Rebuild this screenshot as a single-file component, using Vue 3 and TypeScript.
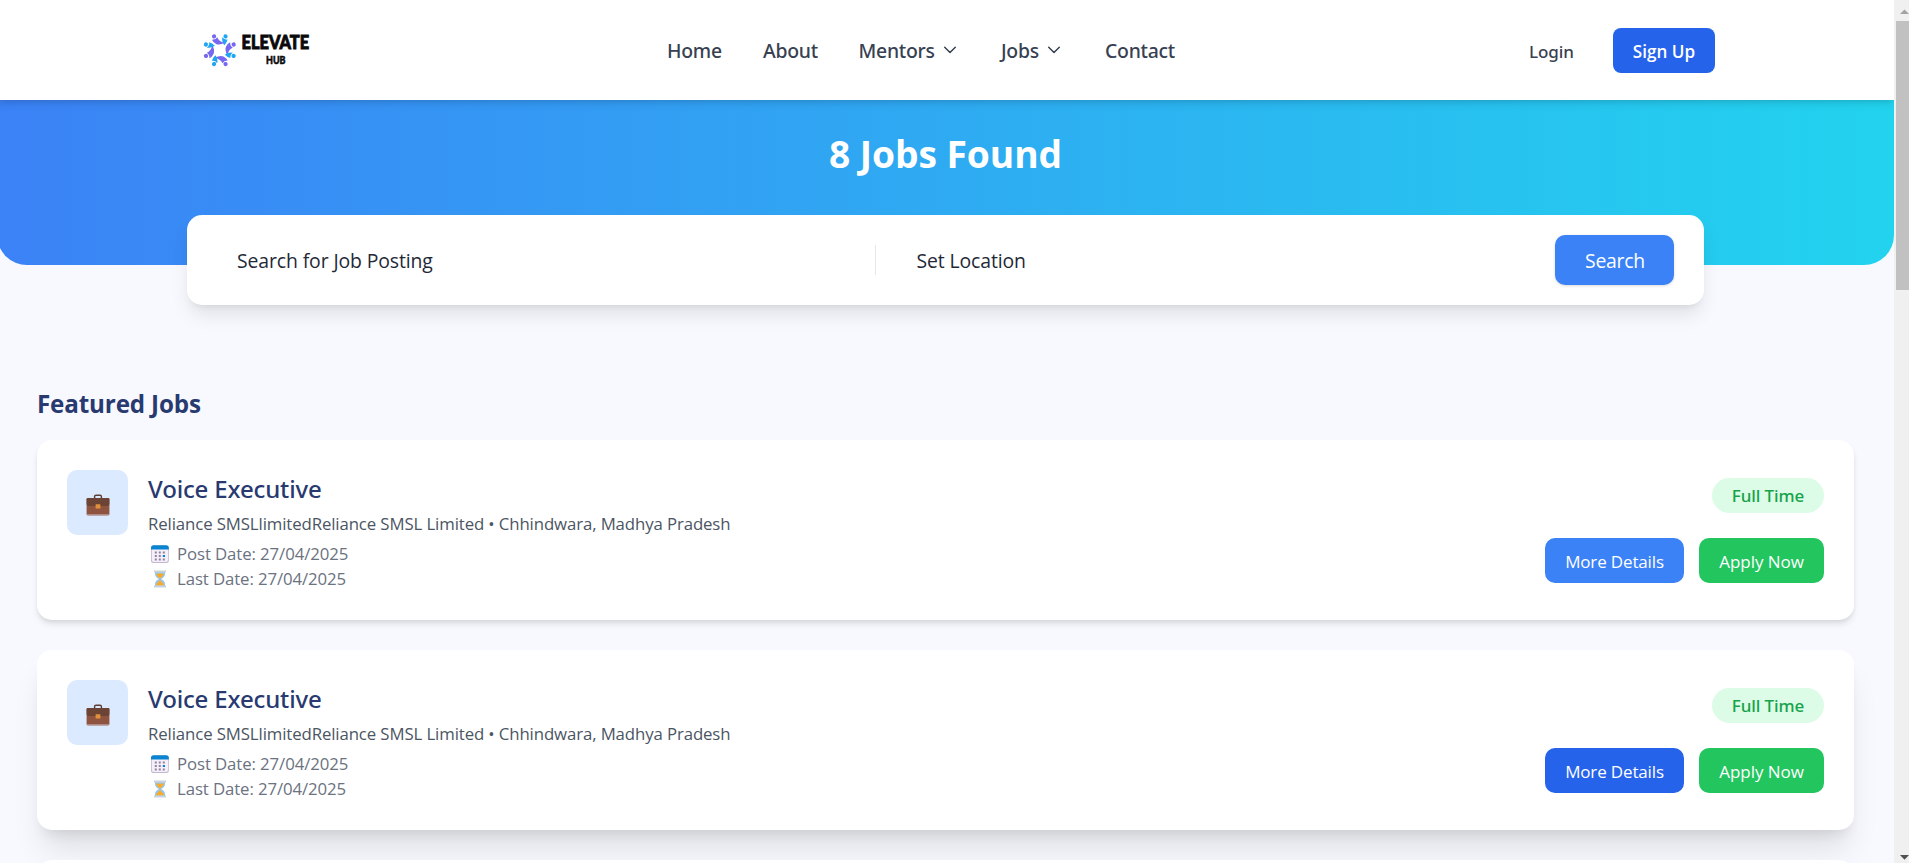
<script setup lang="ts">
interface NavItem { label: string; menu?: boolean }
interface Job { id: number; title: string; company: string; place: string; posted: string; last: string; kind: string; active?: boolean }

const nav: NavItem[] = [
  { label: 'Home' },
  { label: 'About' },
  { label: 'Mentors', menu: true },
  { label: 'Jobs', menu: true },
  { label: 'Contact' },
]

const base = {
  title: 'Voice Executive',
  company: 'Reliance SMSLlimitedReliance SMSL Limited',
  place: 'Chhindwara, Madhya Pradesh',
  posted: '27/04/2025',
  last: '27/04/2025',
  kind: 'Full Time',
}
const jobs: Job[] = [
  { id: 1, ...base },
  { id: 2, ...base, active: true },
  { id: 3, ...base },
]

const wide = 'M-3.4 -12.6 Q0 -11 2.6 -13 Q2.2 -8.8 7.4 -5 Q1.6 -4.4 -1 -7.2 Q-3.2 -9.6 -3.4 -12.6Z'
const narrow = 'M-2.6 -13 Q0.4 -11.2 3.2 -12.8 Q3.6 -9.4 2.2 -6.4 Q-1.8 -8.6 -2.6 -13Z'
const petals = Array.from({ length: 8 }, (_, i) => ({
  turn: `rotate(${22.5 + i * 45})`,
  color: i % 2 === 0 ? '#1fa5f2' : '#7668f0',
  shape: i % 2 === 0 ? narrow : wide,
}))
</script>

<template>
  <div class="window">
    <div class="page">
      <header class="header">
        <svg class="logo" width="112" height="60" viewBox="0 -10 112 60" aria-label="Elevate Hub">
          <g transform="translate(16.8 20.2)">
            <g v-for="p in petals" :key="p.turn" :transform="p.turn" :fill="p.color">
              <circle cx="0" cy="-15" r="2.1" />
              <path :d="p.shape" />
            </g>
          </g>
          <text class="brand" x="38.6" y="19" font-size="19" textLength="67.5" lengthAdjust="spacingAndGlyphs">ELEVATE</text>
          <text class="brand small" x="63" y="34.3" font-size="10.5" textLength="19.5" lengthAdjust="spacingAndGlyphs">HUB</text>
        </svg>
        <nav class="nav">
          <a v-for="n in nav" :key="n.label" class="nav-item">
            {{ n.label }}
            <svg v-if="n.menu" class="chevron" width="14" height="10" viewBox="0 0 14 10">
              <path d="M1.7 2.2 7 7.5 12.3 2.2" fill="none" stroke="currentColor" stroke-width="1.5" stroke-linecap="round" stroke-linejoin="round" />
            </svg>
          </a>
        </nav>
        <div class="account">
          <a class="login">Login</a>
          <button class="signup">Sign Up</button>
        </div>
      </header>

      <section class="hero">
        <h1>8 Jobs Found</h1>
      </section>
      <div class="search">
        <div class="field first">Search for Job Posting</div>
        <div class="field">Set Location</div>
        <button class="search-btn">Search</button>
      </div>

      <main class="featured">
        <h2>Featured Jobs</h2>
        <article v-for="job in jobs" :key="job.id" class="card" :class="{ active: job.active }">
          <div class="badge-icon">
            <svg width="24" height="22" viewBox="0 0 24 22">
              <path d="M8.6 4V2.6Q8.6 1.2 10 1.2h4q1.4 0 1.4 1.4V4" fill="none" stroke="#5c4038" stroke-width="1.4" />
              <rect x=".6" y="4" width="22.8" height="17.2" rx="1.3" fill="#8f5440" />
              <path d="M.6 20h22.8q0 1.4-1.3 1.4H1.9Q.6 21.4.6 20Z" fill="#b08b85" />
              <path d="M.6 5.3Q.6 4 1.9 4h20.2q1.3 0 1.3 1.3V10q0 2-2 2H2.6q-2 0-2-2Z" fill="#6b4435" />
              <rect x="9.6" y="10.2" width="4.8" height="4.4" rx=".6" fill="#e0913a" />
            </svg>
          </div>
          <div class="info">
            <h3>{{ job.title }}</h3>
            <p class="company">{{ job.company }} • {{ job.place }}</p>
            <p class="date">
              <svg width="24" height="20" viewBox="0 0 24 20">
                <rect x="3" y="1.5" width="17.8" height="17.5" rx="2.5" fill="#c3b8cc" />
                <rect x="3.8" y="2" width="16.2" height="16" rx="2" fill="#f4effa" />
                <path d="M3 5.5V4q0-2.8 2.8-2.8H18q2.8 0 2.8 2.8v1.5Z" fill="#0a84d0" />
                <path d="M6.8 7.5h2v2h-2zM10.8 7.5h2v2h-2zM14.8 7.5h2v2h-2zM6.8 11h2v2h-2zM10.8 11h2v2h-2zM6.8 14.5h2v2h-2zM10.8 14.5h2v2h-2zM14.8 14.5h2v2h-2z" fill="#8f859c" />
                <rect x="14.8" y="11" width="2.2" height="2" fill="#0a84d0" />
              </svg>
              <span>Post Date: {{ job.posted }}</span>
            </p>
            <p class="date">
              <svg width="24" height="20" viewBox="0 0 24 20">
                <path d="M7 3h10v2q0 3-4 5 4 2 4 5v2H7v-2q0-3 4-5-4-2-4-5Z" fill="#8cc8fa" />
                <path d="M8 4.5h8q-.5 3-4 5.2Q8.500 7.500 8 4.500ZM12 9.500l.8 2.500q2.800 1.500 3.600 4.500H7.600q.8-3 3.600-4.500Z" fill="#fbab2c" />
                <path d="M6 1.500h12v2H6zM6 16.500h12v2H6z" fill="#c9d3dc" />
              </svg>
              <span>Last Date: {{ job.last }}</span>
            </p>
          </div>
          <div class="side">
            <span class="kind">{{ job.kind }}</span>
            <div class="actions">
              <button class="details">More Details</button>
              <button class="apply">Apply Now</button>
            </div>
          </div>
        </article>
      </main>
    </div>
    <div class="scrollbar">
      <svg width="15" height="20" viewBox="0 0 15 20"><path d="M6 14 10.5 9.5 15 14Z" fill="#a3a3a3" /></svg>
      <div class="thumb"></div>
      <svg class="down" width="15" height="20" viewBox="0 0 15 20"><path d="M6 12 10.5 16.8 15 12Z" fill="#505050" /></svg>
    </div>
  </div>
</template>

<style>
body { overflow: hidden; }
</style>

<style scoped>
.window {
  display: flex;
  width: 1909px;
  height: 863px;
  overflow: hidden;
  font-family: "Open Sans", "Noto Sans", sans-serif;
}
.window * { box-sizing: border-box; }
h1, h2, h3, p { margin: 0; }
button {
  border: 0;
  margin: 0;
  font-family: inherit;
  color: #fff;
  white-space: nowrap;
}
.page {
  flex: none;
  width: 1897px;
  height: 863px;
  margin-left: -3px;
  overflow: hidden;
  background: #f8f9fe;
}
.header {
  position: relative;
  z-index: 2;
  display: flex;
  align-items: center;
  height: 100px;
  background: #fff;
  box-shadow: 0 5px 7.5px -1.25px rgba(0, 0, 0, .1), 0 2.5px 5px -2.5px rgba(0, 0, 0, .1);
}
.logo { flex: none; margin-left: 206px; overflow: visible; }
.brand { font-family: Lato, sans-serif; font-weight: 900; fill: #0a0a0a; stroke: #0a0a0a; stroke-width: .9px; }
.brand.small { stroke-width: .5px; }
.nav {
  display: grid;
  grid-template-columns: 96px 95.5px 142.5px 104px 80px;
  margin-left: 352px;
  padding-top: 2px;
  font: 500 19.4px/30px "Noto Sans", sans-serif;
  letter-spacing: -.25px;
  color: #374151;
}
.nav-item { display: flex; align-items: center; gap: 8px; white-space: nowrap; }
.chevron { margin-top: -3px; }
.account { display: flex; align-items: center; margin-left: 344px; }
.login {
  width: 84px;
  padding-top: 3px;
  font: 500 17px/26px "Noto Sans", sans-serif;
  letter-spacing: -.1px;
  color: #374151;
}
.signup {
  width: 102px;
  height: 45px;
  padding: 3px 0 0;
  border-radius: 8px;
  background: #2563eb;
  font-size: 17.1px;
  font-weight: 600;
}
.hero {
  height: 165px;
  padding-top: 30px;
  border-radius: 0 0 30px 30px;
  background: linear-gradient(to right, #3b82f6, #22d3ee);
}
h1 {
  font-size: 37.2px;
  font-weight: 700;
  line-height: 48px;
  letter-spacing: -.05px;
  text-align: center;
  color: #fff;
}
.search {
  position: relative;
  z-index: 1;
  display: flex;
  align-items: center;
  width: 1517px;
  height: 90px;
  margin: -50px auto 0;
  padding: 0 30px;
  border-radius: 15px;
  background: #fff;
  box-shadow: 0 12.5px 18.75px -3.75px rgba(0, 0, 0, .1), 0 5px 7.5px -5px rgba(0, 0, 0, .1);
}
.field {
  flex: 1;
  height: 30px;
  padding-left: 40.5px;
  font-size: 19.4px;
  line-height: 31px;
  letter-spacing: -.11px;
  color: #1f2937;
}
.field.first { flex: 0 0 659px; padding-left: 20px; border-right: 1px solid #e5e7eb; }
.search-btn {
  width: 119px;
  height: 50px;
  padding: 1px 0 0 1px;
  border-radius: 10px;
  background: #3b82f6;
  box-shadow: 0 1px 3px rgba(0, 0, 0, .15);
  font-size: 19.4px;
  letter-spacing: -.25px;
}
.featured { padding: 80px 40px 0; }
h2 {
  height: 55px;
  font-size: 24.2px;
  font-weight: 700;
  line-height: 38px;
  letter-spacing: -.15px;
  color: #283a70;
}
.card {
  display: flex;
  height: 180px;
  margin-bottom: 30px;
  padding: 30px;
  border-radius: 15px;
  background: #fff;
  box-shadow: 0 5px 7.5px -1.25px rgba(0, 0, 0, .1), 0 2.5px 5px -2.5px rgba(0, 0, 0, .1);
}
.card.active { box-shadow: 0 25px 31.25px -6.25px rgba(0, 0, 0, .1), 0 10px 12.5px -7.5px rgba(0, 0, 0, .1); }
.badge-icon {
  display: flex;
  justify-content: center;
  width: 61px;
  height: 65px;
  margin-right: 20px;
  padding-top: 24px;
  border-radius: 10px;
  background: #dbeafe;
}
.info { flex: 1; }
h3 {
  height: 37px;
  font: 500 24px/37px "Noto Sans", sans-serif;
  letter-spacing: -.15px;
  color: #283a70;
}
.company {
  height: 34px;
  font-size: 16.8px;
  line-height: 33px;
  letter-spacing: -.11px;
  color: #4b5563;
}
.date {
  display: flex;
  align-items: center;
  gap: 5px;
  height: 25px;
  font-size: 16.8px;
  line-height: 25px;
  letter-spacing: -.1px;
  color: #6b7280;
}
.side { display: flex; flex-direction: column; align-items: flex-end; padding-top: 8px; }
.kind {
  width: 112px;
  height: 35px;
  border-radius: 18px;
  background: #dcfce7;
  font: 500 17px/36px "Noto Sans", sans-serif;
  letter-spacing: -.1px;
  text-align: center;
  color: #16a34a;
}
.actions { display: flex; gap: 15px; margin-top: 25px; }
.actions button {
  height: 45px;
  padding: 1px 0 0;
  border-radius: 10px;
  font-size: 17px;
}
.actions .details { width: 139px; background: #3b82f6; letter-spacing: -.15px; }
.active .actions .details { background: #2563eb; }
.actions .apply { width: 125px; background: #22c55e; letter-spacing: -.05px; }
.scrollbar { flex: none; display: flex; flex-direction: column; width: 15px; height: 863px; background: #f0f0f0; }
.scrollbar svg { flex: none; }
.thumb { width: 13px; height: 269px; margin: 1px 0 0 2px; background: #c1c1c1; }
.down { margin-top: auto; }
</style>
